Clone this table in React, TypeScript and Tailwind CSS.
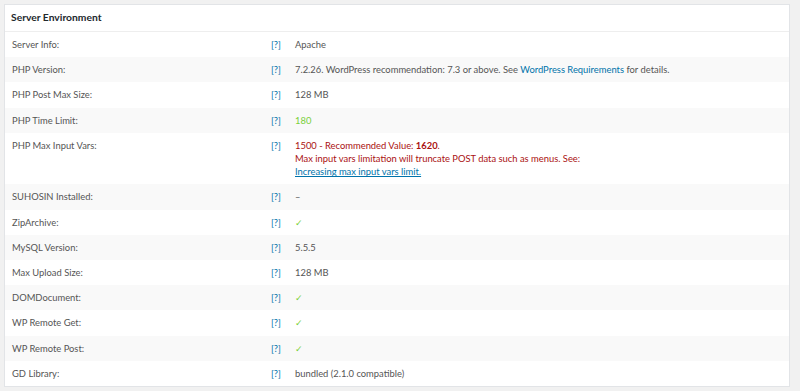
import React from "react";

const Check = () => <span className="text-[#7ad03a]">✓</span>;

type Row = { label: string; value: React.ReactNode };

const rows: Row[] = [
  { label: "Server Info:", value: "Apache" },
  {
    label: "PHP Version:",
    value: (
      <>
        7.2.26. WordPress recommendation: 7.3 or above. See{" "}
        <span className="text-[#0073aa]">WordPress Requirements</span> for details.
      </>
    ),
  },
  { label: "PHP Post Max Size:", value: "128 MB" },
  { label: "PHP Time Limit:", value: <span className="text-[#7ad03a]">180</span> },
  {
    label: "PHP Max Input Vars:",
    value: (
      <div className="text-[#aa1111]">
        <div>
          1500 - Recommended Value: <strong className="font-bold">1620</strong>.
        </div>
        <div>Max input vars limitation will truncate POST data such as menus. See:</div>
        <div>
          <span className="text-[#0073aa] underline">Increasing max input vars limit.</span>
        </div>
      </div>
    ),
  },
  { label: "SUHOSIN Installed:", value: "–" },
  { label: "ZipArchive:", value: <Check /> },
  { label: "MySQL Version:", value: "5.5.5" },
  { label: "Max Upload Size:", value: "128 MB" },
  { label: "DOMDocument:", value: <Check /> },
  { label: "WP Remote Get:", value: <Check /> },
  { label: "WP Remote Post:", value: <Check /> },
  { label: "GD Library:", value: "bundled (2.1.0 compatible)" },
];

export default function App() {
  return (
    <div
      className="w-[800px] h-[391px] bg-[#f1f1f1] pt-[4px] pl-[4px] pr-[10px]"
      style={{ fontFamily: 'Lato, "Open Sans", sans-serif' }}
    >
      <div className="bg-white border border-[#e2e4e7]">
        <div className="h-[27px] flex items-center pl-[6px] border-b border-[#eeeeee] text-[10.3px] font-bold text-[#23282d]">
          Server Environment
        </div>
        {rows.map((r, i) => (
          <div
            key={i}
            className={`flex items-start pl-[7px] py-[6px] text-[9.4px] leading-[13.2px] text-[#555] ${
              i % 2 === 1 ? "bg-[#f9f9f9]" : "bg-white"
            }`}
          >
            <div className="w-[259px] shrink-0">{r.label}</div>
            <div className="w-[24px] shrink-0 text-[#0073aa]">[?]</div>
            <div className="flex-1">{r.value}</div>
          </div>
        ))}
      </div>
    </div>
  );
}
